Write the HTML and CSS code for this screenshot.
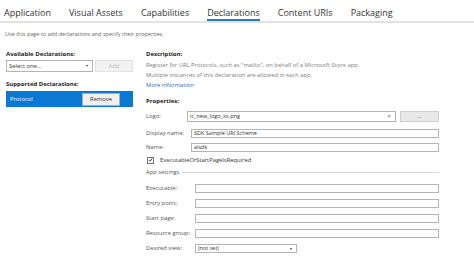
FILE: index.html
```html
<!DOCTYPE html>
<html lang="en">
<head>
<meta charset="UTF-8">
<title>Package Manifest - Declarations</title>
<link rel="stylesheet" href="styles.css">
</head>
<body>
<div class="tabs">
    <span class="tab">Application</span>
    <span class="tab">Visual Assets</span>
    <span class="tab">Capabilities</span>
    <span class="tab active">Declarations</span>
    <span class="tab">Content URIs</span>
    <span class="tab">Packaging</span>
</div>
<p class="intro">Use this page to add declarations and specify their properties.</p>
<div class="main">
    <div class="left">
        <h3 class="heading">Available Declarations:</h3>
        <div class="add-row">
            <div class="select">Select one...<span class="caret"></span></div>
            <button class="btn add-btn" disabled>Add</button>
        </div>
        <h3 class="heading supported">Supported Declarations:</h3>
        <div class="decl-item">
            <span>Protocol</span>
            <button class="btn remove-btn">Remove</button>
        </div>
    </div>
    <div class="right">
        <h3 class="heading">Description:</h3>
        <p class="desc">Register for URL Protocols, such as "mailto", on behalf of a Microsoft Store app.</p>
        <p class="desc">Multiple instances of this declaration are allowed in each app.</p>
        <a class="more" href="#">More information</a>
        <h3 class="heading props">Properties:</h3>
        <div class="row logo-row">
            <label class="lbl lbl-logo">Logo:</label>
            <div class="input logo-input">ic_new_logo_xx.png<span class="clear">&#x2715;</span></div>
            <button class="btn browse-btn">...</button>
        </div>
        <div class="row first-row">
            <label class="lbl lbl-mid">Display name:</label>
            <div class="input">SDK Sample URI Scheme</div>
        </div>
        <div class="row">
            <label class="lbl lbl-mid">Name:</label>
            <div class="input">alsdk</div>
        </div>
        <div class="check-row">
            <span class="checkbox">
                <svg width="6" height="6" viewBox="0 0 6 6"><path d="M1 3.2 L2.4 4.6 L5 1.2" fill="none" stroke="#222" stroke-width="1"/></svg>
            </span>
            <span>ExecutableOrStartPageIsRequired</span>
        </div>
        <div class="group">
            <span>App settings</span>
            <span class="group-line"></span>
        </div>
        <div class="row settings first-setting">
            <label class="lbl lbl-wide">Executable:</label>
            <div class="input"></div>
        </div>
        <div class="row settings">
            <label class="lbl lbl-wide">Entry point:</label>
            <div class="input"></div>
        </div>
        <div class="row settings">
            <label class="lbl lbl-wide">Start page:</label>
            <div class="input"></div>
        </div>
        <div class="row settings">
            <label class="lbl lbl-wide">Resource group:</label>
            <div class="input"></div>
        </div>
        <div class="row settings">
            <label class="lbl lbl-wide">Desired view:</label>
            <div class="select view-select">(not set)<span class="caret"></span></div>
        </div>
    </div>
</div>
</body>
</html>
```
FILE: styles.css
```css
* {
    margin: 0;
    padding: 0;
    box-sizing: border-box;
    font-family: 'Open Sans', 'Noto Sans', sans-serif;
}
body {
    background: #fff;
    width: 474px;
    height: 269px;
    overflow: hidden;
    color: #555;
    font-size: 5.8px;
}
.tabs {
    display: flex;
    gap: 18px;
    height: 23px;
    padding: 5px 0 0 4px;
    border-bottom: 2px solid #e2e2e2;
}
.tab {
    font-size: 9px;
    color: #333;
    height: 16px;
    line-height: 15px;
}
.tab.active {
    border-bottom: 2px solid #2a76c6;
}
.intro {
    padding: 7px 0 0 5px;
    height: 26px;
    color: #666;
    font-size: 5.5px;
}
.main {
    display: flex;
    padding-left: 6px;
}
.heading {
    font-size: 6px;
    font-weight: 700;
    color: #222;
    height: 11px;
    line-height: 11px;
}
.left {
    width: 127px;
}
.add-row {
    display: flex;
    gap: 2px;
    height: 12px;
}
.select {
    position: relative;
    width: 87px;
    height: 12px;
    border: 1px solid #b4b4b4;
    background: #fff;
    color: #333;
    line-height: 10px;
    padding-left: 2px;
}
.caret {
    position: absolute;
    right: 4px;
    top: 4px;
    border-left: 1.5px solid transparent;
    border-right: 1.5px solid transparent;
    border-top: 2px solid #444;
}
.btn {
    border: 1px solid #c8c8c8;
    background: #e6e6e6;
    font-size: 5.8px;
    color: #333;
    height: 12px;
}
.add-btn {
    width: 38px;
    color: #b9b9b9;
    background: #f2f2f2;
    border-color: #e2e2e2;
}
.supported {
    margin-top: 7px;
}
.decl-item {
    display: flex;
    align-items: center;
    justify-content: space-between;
    margin-top: 1px;
    height: 16px;
    background: #0b78d4;
    color: #fff;
    padding: 0 13px 0 4px;
}
.remove-btn {
    width: 38px;
    height: 13px;
    background: #f0f0f0;
    border-color: #adadad;
}
.right {
    margin-left: 13px;
    width: 293px;
}
.desc {
    height: 10px;
    line-height: 10px;
    color: #808080;
}
.more {
    display: block;
    height: 10px;
    line-height: 10px;
    color: #1e6ec0;
    text-decoration: none;
}
.props {
    margin-top: 6px;
}
.row {
    display: flex;
    align-items: center;
    height: 14px;
    margin-top: 2px;
}
.lbl {
    flex-shrink: 0;
    color: #555;
}
.lbl-logo {
    width: 41px;
}
.lbl-mid {
    width: 45px;
}
.lbl-wide {
    width: 49px;
}
.input {
    flex: 1;
    height: 9px;
    border: 1px solid #b4b4b4;
    background: #fff;
    color: #333;
    line-height: 7px;
    padding-left: 2px;
    font-size: 5.5px;
}
.logo-input {
    position: relative;
    height: 11px;
    line-height: 9px;
}
.clear {
    position: absolute;
    right: 4px;
    top: 0;
    font-size: 5px;
    color: #5a7ea8;
}
.browse-btn {
    width: 39px;
    height: 11px;
    margin-left: 4px;
    background: #e8e8e8;
    border-color: #d0d0d0;
    line-height: 6px;
    color: #666;
}
.first-row {
    margin-top: 3px;
}
.row + .row:not(.first-row):not(.settings) {
    margin-top: 0;
}
.check-row {
    display: flex;
    align-items: center;
    gap: 6px;
    height: 12px;
    color: #333;
    padding-left: 1px;
}
.checkbox {
    display: flex;
    width: 7px;
    height: 7px;
    border: 1px solid #777;
    background: #fff;
    align-items: center;
    justify-content: center;
}
.group {
    display: flex;
    align-items: center;
    gap: 3px;
    height: 12px;
    color: #555;
}
.group-line {
    flex: 1;
    border-top: 1px solid #d8d8d8;
}
.settings {
    margin-top: 1px;
}
.first-setting {
    margin-top: 3px;
}
.view-select {
    width: 102px;
    height: 9px;
    line-height: 7px;
    font-size: 5.5px;
}
.view-select .caret {
    top: 3px;
}
```
